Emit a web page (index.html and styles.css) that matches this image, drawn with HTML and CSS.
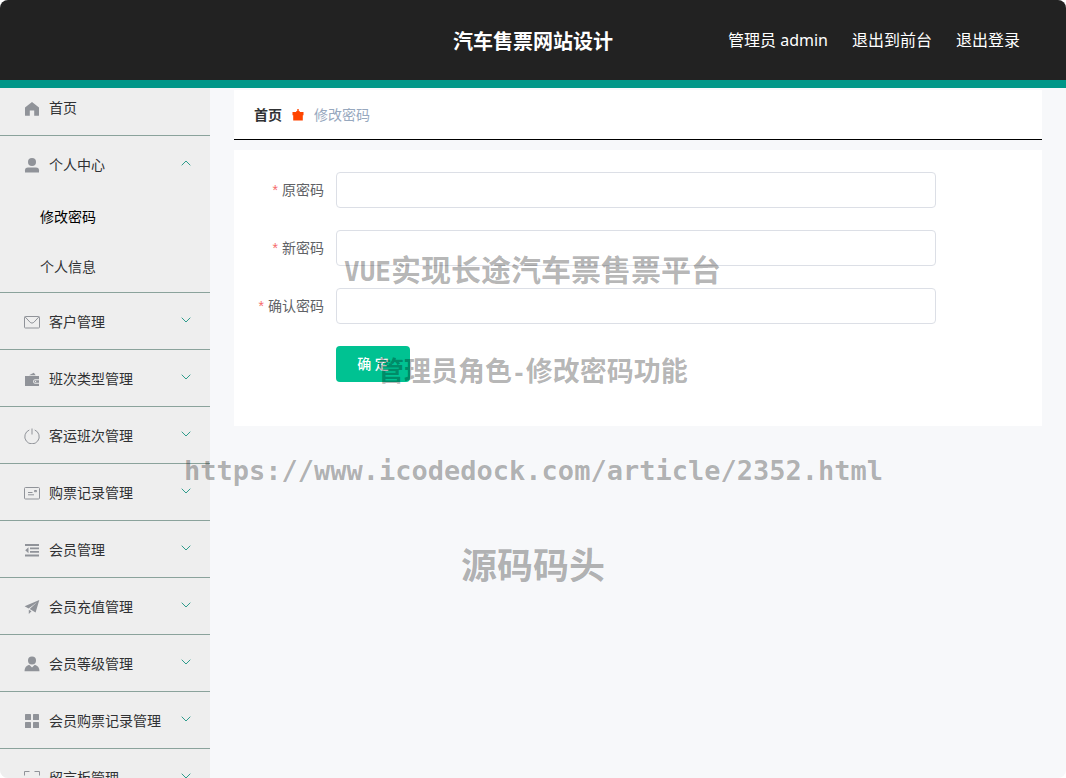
FILE: index.html
```html
<!DOCTYPE html>
<html lang="zh-CN">
<head>
<meta charset="utf-8">
<meta name="viewport" content="width=device-width, initial-scale=1">
<title>汽车售票网站设计</title>
<link rel="stylesheet" href="styles.css">
</head>
<body>
<svg class="sprite" aria-hidden="true">
  <symbol id="arrow" viewBox="0 0 10 6"><path d="M.7.7 5 5 9.3.7" fill="none" stroke="currentColor"/></symbol>
</svg>
<div class="page">
  <header class="topbar">
    <h1 class="topbar-title">汽车售票网站设计</h1>
    <nav class="topbar-links">
      <span>管理员 admin</span>
      <a href="#front">退出到前台</a>
      <a href="#logout">退出登录</a>
    </nav>
  </header>
  <div class="body">
    <aside class="sidebar">
      <ul class="menu">
        <li class="menu-item menu-item-home"><button class="menu-title" type="button">
          <svg class="icon" viewBox="0 0 16 16"><path d="M8 1 1 6.6V14.2q0 .6.6.6H5.8V9.6h4.4v5.2h4.2q.6 0 .6-.6V6.6z"/></svg>
          <span>首页</span></button></li>
        <li class="menu-item"><button class="menu-title" type="button" aria-expanded="true">
          <svg class="icon" viewBox="0 0 16 16"><circle cx="8" cy="5" r="4"/><path d="M1 15.6V13.2Q1 10.4 4 10.4h8q3 0 3 2.8v2.4z"/></svg>
          <span>个人中心</span><svg class="arrow arrow-up"><use href="#arrow"/></svg></button>
          <ul class="submenu">
            <li><a class="active" href="#password">修改密码</a></li>
            <li><a href="#profile">个人信息</a></li>
          </ul></li>
        <li class="menu-item"><button class="menu-title" type="button">
          <svg class="icon line" viewBox="0 0 16 16"><rect x=".5" y="2.5" width="15" height="11.5" rx=".8"/><path d="m1.2 3 5 5.4q1.8 1.5 3.6 0L14.8 3"/></svg>
          <span>客户管理</span><svg class="arrow"><use href="#arrow"/></svg></button></li>
        <li class="menu-item"><button class="menu-title" type="button">
          <svg class="icon" viewBox="0 0 16 16"><path d="M5 4.3 9.8 1.8l1.900 2.500z"/><path d="M1 5h14v3.200h-4.200a2.400 2.400 0 0 0 0 4.600H15V15H1z"/><path d="M11.200 9.200H15v2.600h-3.800a1.300 1.300 0 0 1 0-2.600z"/><circle class="hole" cx="11.500" cy="10.500" r=".7"/></svg>
          <span>班次类型管理</span><svg class="arrow"><use href="#arrow"/></svg></button></li>
        <li class="menu-item"><button class="menu-title" type="button">
          <svg class="icon line" viewBox="0 0 16 16"><path d="M5.300 2A7.200 7.200 0 1 0 10.700 2M8 .5v6"/></svg>
          <span>客运班次管理</span><svg class="arrow"><use href="#arrow"/></svg></button></li>
        <li class="menu-item"><button class="menu-title" type="button">
          <svg class="icon line" viewBox="0 0 16 16"><rect x=".5" y="2.500" width="15" height="11.500" rx="1"/><path d="M4 7.500h4.500M4 9.800h6M10.500 5.500h2v1.200h-2z"/></svg>
          <span>购票记录管理</span><svg class="arrow"><use href="#arrow"/></svg></button></li>
        <li class="menu-item"><button class="menu-title" type="button">
          <svg class="icon" viewBox="0 0 16 16"><path d="M1 2h14v2H1zM6 5.500h9v1.800H6zM6 9h9v1.800H6zM1 12.500h14v2H1zM4.500 5.200v6L1.200 8.200z"/></svg>
          <span>会员管理</span><svg class="arrow"><use href="#arrow"/></svg></button></li>
        <li class="menu-item"><button class="menu-title" type="button">
          <svg class="icon" viewBox="0 0 16 16"><path d="M15.300 1 .6 7.200l4 2.300L13 3.300 5.700 10l5.900 3.600zM4.800 10.700v4.300l2.700-2.800z"/></svg>
          <span>会员充值管理</span><svg class="arrow"><use href="#arrow"/></svg></button></li>
        <li class="menu-item"><button class="menu-title" type="button">
          <svg class="icon" viewBox="0 0 16 16"><circle cx="8" cy="4.600" r="4"/><path d="M.5 15.200q0-5 4.700-6.400L8 11.600l2.800-2.800q4.700 1.400 4.700 6.400z"/></svg>
          <span>会员等级管理</span><svg class="arrow"><use href="#arrow"/></svg></button></li>
        <li class="menu-item"><button class="menu-title" type="button">
          <svg class="icon" viewBox="0 0 16 16"><rect x="1" y="1" width="6" height="6" rx=".6"/><rect x="9" y="1" width="6" height="6" rx=".6"/><rect x="1" y="9" width="6" height="6" rx=".6"/><rect x="9" y="9" width="6" height="6" rx=".6"/></svg>
          <span>会员购票记录管理</span><svg class="arrow"><use href="#arrow"/></svg></button></li>
        <li class="menu-item"><button class="menu-title" type="button">
          <svg class="icon line" viewBox="0 0 16 16"><path d="M.5 5.500v-4H5.500M10.500 1.500h5v4M15.500 10.500v4h-5M5.500 14.500h-5v-4"/></svg>
          <span>留言板管理</span><svg class="arrow"><use href="#arrow"/></svg></button></li>
      </ul>
    </aside>
    <main class="main">
      <nav class="breadcrumb" aria-label="面包屑">
        <a href="#home">首页</a>
        <svg class="crumb-icon" viewBox="0 0 12 12"><path d="M.5 3h3.500Q4 2 5.300 1.800V0h1.400v1.800Q8 2 8 3h3.500v3.200h-.7v5.300H1.200V6.200H.5z"/></svg>
        <span>修改密码</span>
      </nav>
      <form class="card">
        <div class="row"><label for="old">原密码</label><input id="old" type="password" required></div>
        <div class="row"><label for="new">新密码</label><input id="new" type="password" required></div>
        <div class="row"><label for="again">确认密码</label><input id="again" type="password" required></div>
        <div class="actions"><button class="submit" type="button">确 定</button></div>
      </form>
    </main>
  </div>
  <div class="mark mark-title"><span class="mark-latin">VUE</span>实现长途汽车票售票平台</div>
  <div class="mark mark-role">管理员角色<span class="mark-dash">-</span>修改密码功能</div>
  <div class="mark mark-url">https://www.icodedock.com/article/2352.html</div>
  <div class="mark mark-brand">源码码头</div>
</div>
</body>
</html>
```

FILE: styles.css
```css
* { box-sizing: border-box; }
body {
  margin: 0;
  background: #fff;
  color: #303133;
  font: 14px/20px "Noto Sans", "Noto Sans CJK SC", sans-serif;
}
ul { margin: 0; padding: 0; list-style: none; }
a { color: inherit; text-decoration: none; }
button, input { font: inherit; }
.sprite { position: absolute; width: 0; height: 0; }
.page {
  position: relative;
  display: flex;
  flex-direction: column;
  height: 100vh;
  overflow: hidden;
  border-radius: 8px;
  background: #f7f8fa;
}
.topbar {
  flex: none;
  display: grid;
  grid-template-columns: 1fr auto 1fr;
  align-items: center;
  height: 88px;
  border-bottom: 8px solid #009688;
  background: #222;
  color: #fff;
}
.topbar-title { grid-column: 2; margin: 0; padding-top: 4px; font-size: 20px; line-height: 28px; }
.topbar-links {
  display: flex;
  justify-content: flex-end;
  gap: 24px;
  padding-right: 46px;
  font-size: 16px;
  line-height: 24px;
  white-space: nowrap;
}
.body { flex: 1; display: flex; min-height: 0; }
.sidebar { flex: none; width: 210px; overflow: hidden; background: #eee; }
.menu-item { border-bottom: 1px solid #8aa29b; }
.menu-item-home { padding-bottom: 7px; }
.menu-title {
  display: flex;
  align-items: center;
  width: 100%;
  height: 56px;
  padding: 2px 19px 0 24px;
  border: 0;
  background: none;
  color: #303133;
  text-align: left;
}
.menu-item-home .menu-title { height: 40px; padding-top: 0; }
.icon { flex: none; width: 16px; height: 16px; margin-right: 9px; fill: #909399; }
.menu-item-home .icon { margin-top: 2px; }
.line { fill: none; stroke: #909399; }
.hole { fill: #eee; }
.arrow { width: 10px; height: 6px; margin: 0 0 4px auto; color: #2f9c8c; }
.arrow-up { transform: rotate(180deg); }
.submenu a { display: block; padding: 15px 0 15px 40px; }
.submenu .active { color: #000; }
.main { flex: 1; min-width: 0; padding: 2px 24px; }
.breadcrumb {
  display: flex;
  align-items: center;
  height: 50px;
  margin-bottom: 10px;
  padding: 0 20px;
  border-bottom: 1px solid #000;
  background: #fff;
  color: #97a8be;
}
.breadcrumb a { color: #303133; font-weight: 700; }
.crumb-icon { width: 12px; height: 12px; margin: 0 10px; fill: #ff4500; }
.card { padding: 22px 22px 44px; background: #fff; }
.row { display: flex; margin-bottom: 22px; }
.row label {
  flex: none;
  width: 80px;
  padding-right: 12px;
  color: #606266;
  line-height: 36px;
  text-align: right;
  white-space: nowrap;
}
.row label::before { content: "*"; margin-right: 4px; color: #f56c6c; font-family: "Liberation Sans", sans-serif; }
.row input {
  width: 100%;
  max-width: 600px;
  height: 36px;
  padding: 0 12px;
  border: 1px solid #dcdfe6;
  border-radius: 4px;
  background: #fff;
}
.actions { padding-left: 80px; }
.submit {
  display: block;
  width: 74px;
  height: 36px;
  padding: 0;
  border: 0;
  border-radius: 4px;
  background: #00c292;
  color: #fff;
  font-weight: 500;
}
/* Watermark text laid over the whole page */
.mark {
  position: absolute;
  color: rgba(0, 0, 0, .3);
  font-family: "Noto Sans CJK SC", sans-serif;
  font-weight: 700;
  line-height: 40px;
  white-space: nowrap;
  pointer-events: none;
}
.mark-title { left: 344px; top: 248px; font-size: 30px; }
.mark-latin { font-family: "DejaVu Sans Mono", monospace; font-size: 26px; }
.mark-role { left: 377px; top: 350px; font-size: 27px; }
.mark-dash { font-family: "DejaVu Sans Mono", monospace; font-size: 23px; }
.mark-url { left: 184px; top: 451px; font-family: "DejaVu Sans Mono", monospace; font-size: 27px; }
.mark-brand { left: 461px; top: 543px; font-size: 36px; }
```
